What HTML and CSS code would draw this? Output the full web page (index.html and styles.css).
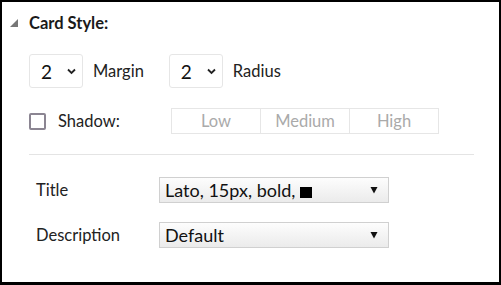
FILE: index.html
```html
<!DOCTYPE html>
<html lang="en">
<head>
  <meta charset="UTF-8">
  <title>Card Style</title>
  <link rel="stylesheet" href="styles.css">
</head>
<body>
<div class="panel">
  <div class="header">
    <span class="toggle"></span>
    <span class="header-title">Card Style:</span>
  </div>

  <div class="row row-sizes">
    <div class="num-select">
      <span>2</span>
      <svg width="9" height="7" viewBox="0 0 9 7"><polyline points="1,1.5 4.5,5 8,1.5" fill="none" stroke="#222" stroke-width="1.8"/></svg>
    </div>
    <span class="row-label">Margin</span>
    <div class="num-select">
      <span>2</span>
      <svg width="9" height="7" viewBox="0 0 9 7"><polyline points="1,1.5 4.5,5 8,1.5" fill="none" stroke="#222" stroke-width="1.8"/></svg>
    </div>
    <span class="row-label">Radius</span>
  </div>

  <div class="row row-shadow">
    <span class="checkbox"></span>
    <span class="shadow-label">Shadow:</span>
    <div class="segments">
      <span class="seg">Low</span>
      <span class="seg">Medium</span>
      <span class="seg">High</span>
    </div>
  </div>

  <div class="divider"></div>

  <div class="font-row first">
    <span class="font-label">Title</span>
    <div class="dropdown">
      <span>Lato, 15px, bold, <span class="swatch"></span></span>
      <svg width="8" height="8" viewBox="0 0 8 8"><polygon points="0.5,1 7.5,1 4,7.5" fill="#111"/></svg>
    </div>
  </div>
  <div class="font-row">
    <span class="font-label">Description</span>
    <div class="dropdown">
      <span>Default</span>
      <svg width="8" height="8" viewBox="0 0 8 8"><polygon points="0.5,1 7.5,1 4,7.5" fill="#111"/></svg>
    </div>
  </div>
</div>
</body>
</html>
```

FILE: styles.css
```css
body {
    margin: 0;
    font-family: Lato, "Open Sans", sans-serif;
    color: #222;
    background: #fff;
}

.panel {
    width: 501px;
    height: 285px;
    box-sizing: border-box;
    border: 2px solid #000;
    border-bottom-width: 3px;
    padding: 11px 0 0 27px;
}

.header {
    display: flex;
    align-items: center;
    height: 20px;
    margin-left: -19px;
}

.toggle {
    width: 0;
    height: 0;
    border-left: 8px solid transparent;
    border-bottom: 8px solid #777;
    margin-right: 11px;
}

.header-title {
    font-weight: bold;
    font-size: 16.5px;
    color: #1a1a1a;
}

.row {
    display: flex;
    align-items: center;
}

.row-sizes {
    margin-top: 21px;
    height: 34px;
}

.num-select {
    width: 54px;
    height: 34px;
    box-sizing: border-box;
    border: 1px solid #e6e6e6;
    border-radius: 3px;
    display: flex;
    align-items: center;
    padding-left: 11px;
    font-size: 19px;
    color: #111;
}

.num-select svg {
    margin-left: 15px;
}

.row-label {
    font-size: 16.5px;
    margin: 0 25px 0 10px;
}

.row-shadow {
    margin-top: 20px;
    height: 26px;
}

.checkbox {
    width: 17px;
    height: 17px;
    box-sizing: border-box;
    border: 2px solid #8b8592;
    border-radius: 2px;
}

.shadow-label {
    font-size: 16.5px;
    margin-left: 12px;
    width: 113px;
}

.segments {
    display: flex;
    border: 1px solid #e6e6e6;
    height: 26px;
    box-sizing: border-box;
}

.seg {
    width: 88px;
    text-align: center;
    line-height: 24px;
    font-size: 16.5px;
    color: #aaa;
}

.seg + .seg {
    border-left: 1px solid #e6e6e6;
}

.divider {
    margin-top: 20px;
    width: 445px;
    height: 1px;
    background: #e4e4e4;
}

.font-row {
    display: flex;
    align-items: center;
    margin-top: 19px;
    padding-left: 7px;
}

.font-row.first {
    margin-top: 22px;
}

.font-label {
    width: 123px;
    font-size: 16.5px;
}

.dropdown {
    width: 230px;
    height: 26px;
    box-sizing: border-box;
    border: 1px solid #d0d0d0;
    background: linear-gradient(#fdfdfd, #ebebeb);
    display: flex;
    align-items: center;
    justify-content: space-between;
    padding: 0 10px 0 5px;
    font-size: 18px;
    color: #111;
}

.swatch {
    display: inline-block;
    width: 12px;
    height: 11px;
    background: #000;
    vertical-align: -1px;
}
```
